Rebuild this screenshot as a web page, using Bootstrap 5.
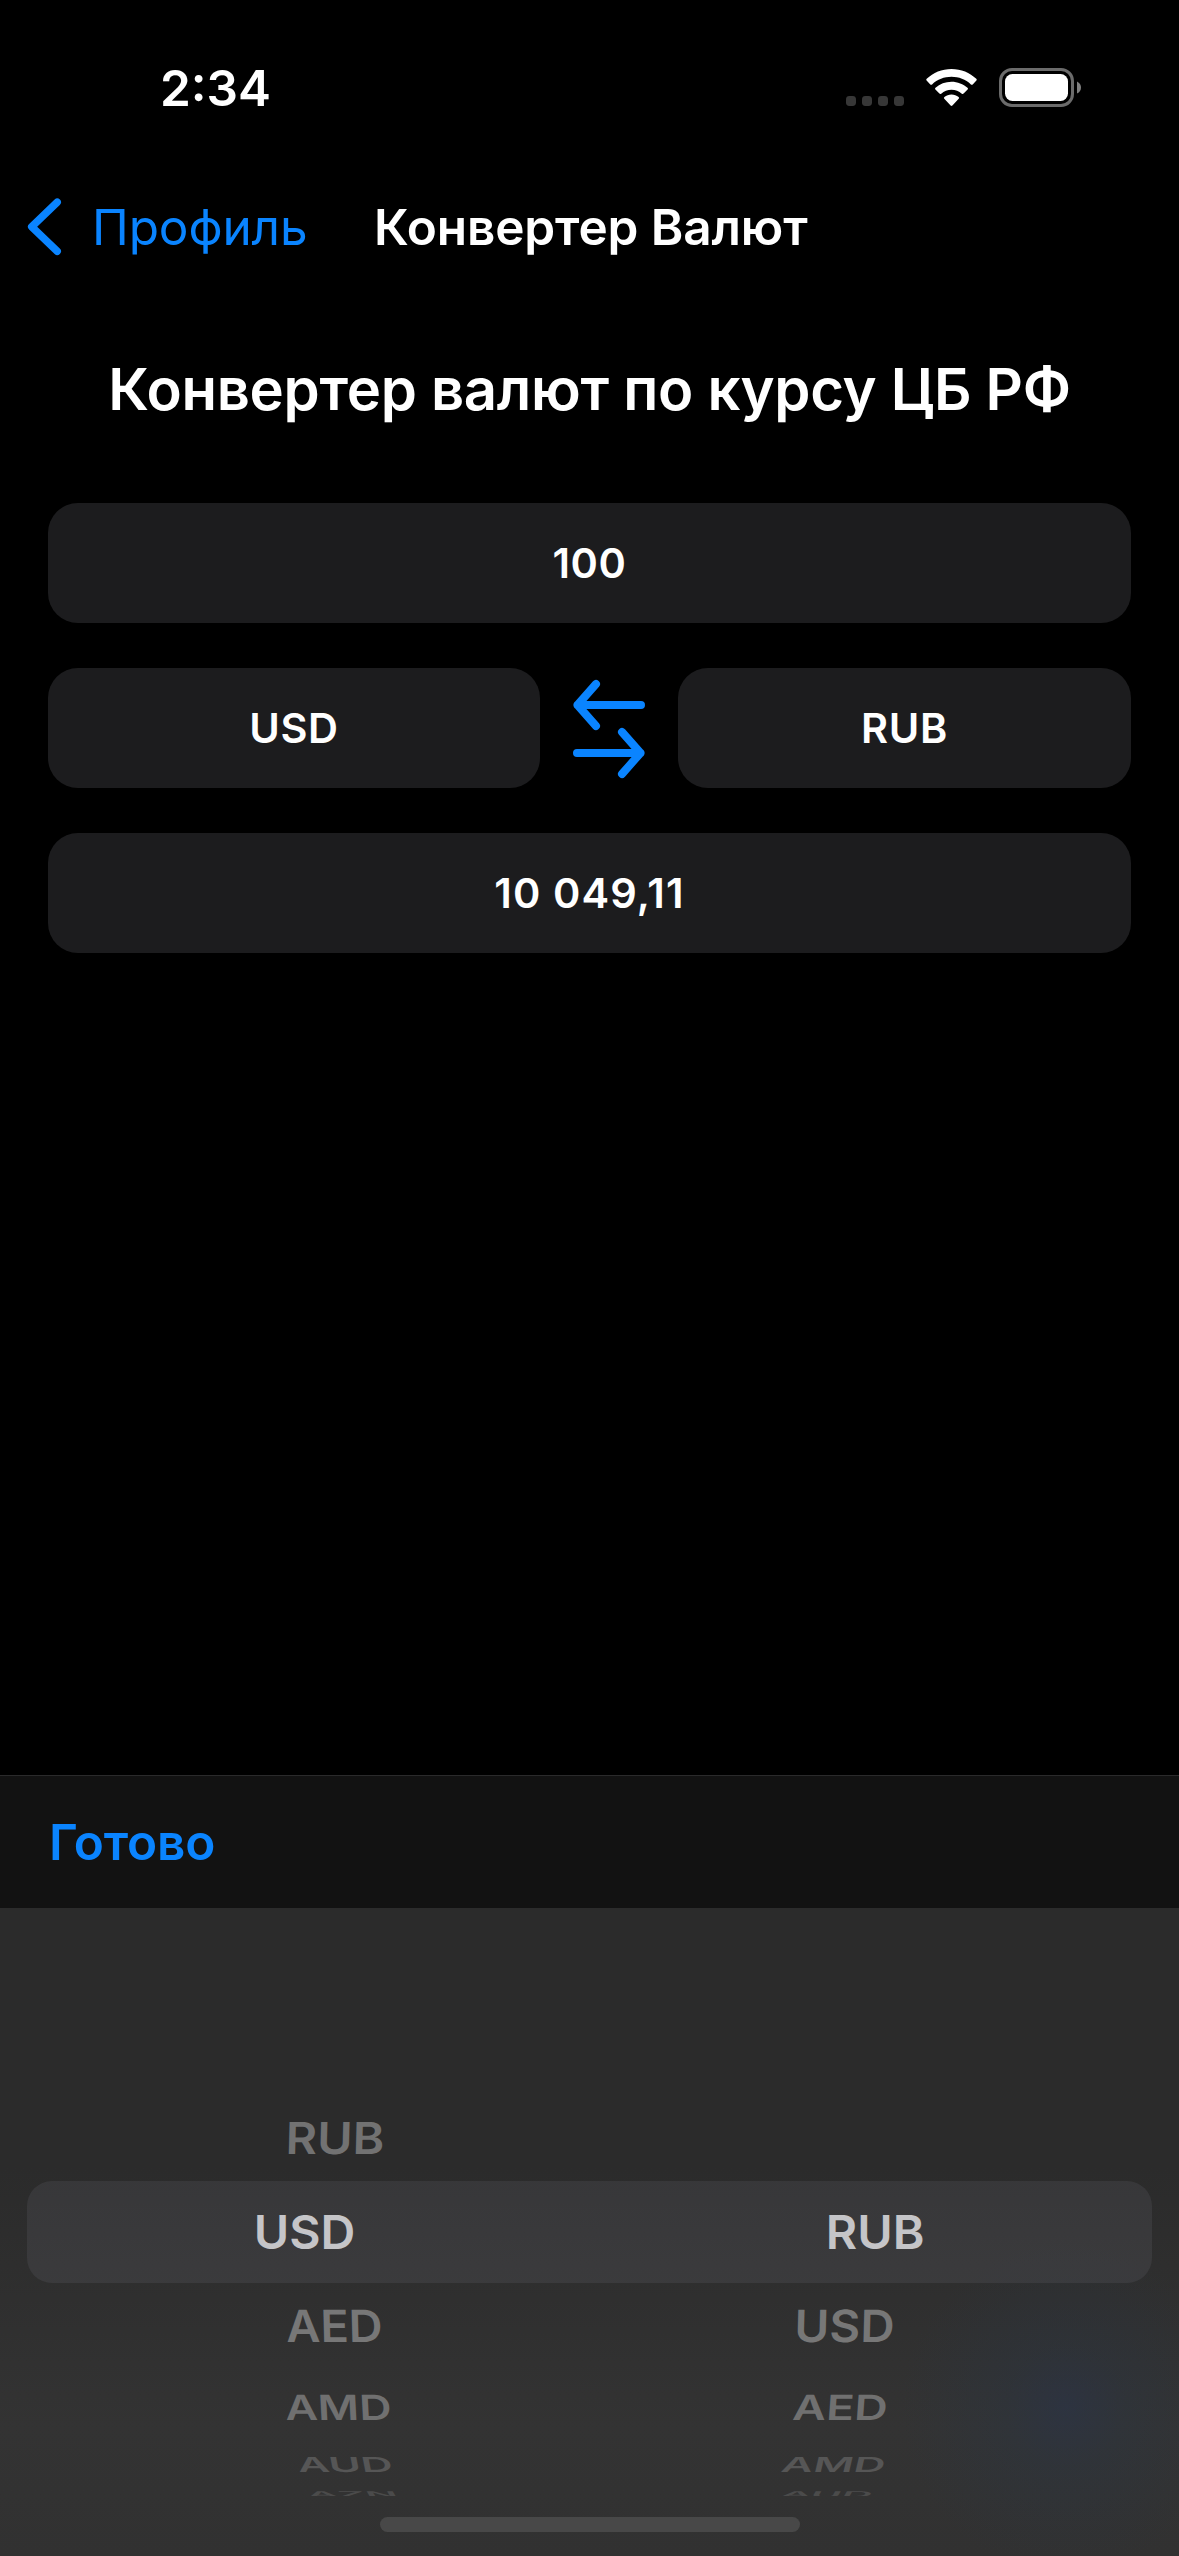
<!DOCTYPE html>
<html lang="ru" data-bs-theme="dark">
<head>
<meta charset="utf-8">
<meta name="viewport" content="width=device-width, initial-scale=1">
<title>Конвертер Валют</title>
<link href="https://cdn.jsdelivr.net/npm/bootstrap@5.3.0/dist/css/bootstrap.min.css" rel="stylesheet">
<style>
  body { background: #000; color: #fff; font-family: Inter, "Noto Sans", sans-serif; line-height: 1.2; }
  .screen { width: 1179px; height: 2556px; }
  svg { display: block; flex: none; }
  .tint { color: #0a84ff; }
  .status-bar { height: 176px; padding-left: 160px; padding-right: 98px; }
  .clock { font-size: 49.5px; letter-spacing: 0; padding-top: 2px; }
  .top-nav { height: 102px; padding: 0 0 0 24px; font-size: 49.5px; letter-spacing: -.12px; }
  .top-nav > a, .top-nav > span { padding-top: 2px; }
  .back-label { margin-left: 29px; width: 282px; }
  .headline { height: 225px; padding-top: 75px; font-size: 58px; letter-spacing: -.29px; line-height: 72px; }
  .form-area { padding: 0 48px; gap: 45px; font-size: 41.5px; }
  .field { height: 120px; border-radius: 30px; background: #1c1c1e; letter-spacing: .6px; padding-top: 2px; }
  .field-from { width: 492px; }
  .field-to { width: 453px; }
  .swap-icon { margin-top: 1px; }
  .total { letter-spacing: 1.1px; }
  .tool-row { height: 133px; border-top: 1px solid #2a2a2b; background: #121212; padding: 2px 0 0 49px; }
  .done { font-size: 49.5px; letter-spacing: -.15px; }
  .wheel { height: 648px; padding-top: 187px; font-size: 47px; line-height: 1;
    background:
      radial-gradient(circle at 1066px 500px, rgba(40,52,78,.5), rgba(40,54,72,.28) 60px, transparent 165px),
      linear-gradient(#2b2b2b 0 260px, #2f2f2f 390px, #333 520px, #313131 100%); }
  .band { margin: 0 27px; border-radius: 25px; background: rgba(118,118,128,.17); color: #c5c5c8; }
  .wheel-row { height: var(--h); }
  .wheel-row > span { flex: 1 1 0; text-align: center; }
  .wheel-row b { display: inline-block; font-weight: 600; transform: translate(var(--dx), var(--dy, -1px)) skewX(var(--sk, 0deg)) scale(var(--sx, 1), var(--sy, 1)); }
  .r0 { --h: 86px; --sy: .935; color: #727272; }
  .r1 { --h: 102px; --sx: 1.025; }
  .r2 { --h: 86px; --sy: .945; color: #777; }
  .r3 { --h: 77px; --sy: .735; --dy: 0px; color: #707070; }
  .r4 { --h: 37px; --sy: .44; --dy: 0px; color: #565656; }
  .r5 { --h: 20px; --sy: .17; --dy: 1px; color: #4b4b4b; clip-path: inset(0 0 7px); }
  .home-bar { width: 420px; height: 15px; border-radius: 8px; background: #484848; margin-top: 14px; }
</style>
</head>
<body>
<div class="screen d-flex flex-column overflow-hidden">
  <header class="status-bar d-flex align-items-center justify-content-between">
    <span class="clock fw-semibold">2:34</span>
    <svg width="236" height="40" viewBox="845 68 236 40" aria-hidden="true">
      <g fill="#373737">
        <rect x="846" y="96" width="10" height="10" rx="3.4"/><rect x="862" y="96" width="10" height="10" rx="3.4"/>
        <rect x="878" y="96" width="10" height="10" rx="3.4"/><rect x="894" y="96" width="10" height="10" rx="3.4"/>
      </g>
      <g fill="#fff">
        <path d="M951.5 69c9.6 0 18.300 3.700 24.800 9.800q1 .9.1 1.800l-3.700 3.800q-.9.9-1.800 0c-5.300-4.900-12.100-7.600-19.400-7.600s-14.100 2.700-19.400 7.600q-.9.9-1.800 0l-3.700-3.800q-.9-.9.1-1.800C933.200 72.700 941.900 69 951.500 69z"/>
        <path d="M951.5 81.700c6.100 0 11.700 2.300 16 6.100q1 .9.1 1.800l-4 4q-.9.8-1.800.1c-2.800-2.400-6.400-3.900-10.300-3.900s-7.500 1.500-10.300 3.900q-.9.7-1.800-.1l-4-4q-.9-.9.1-1.800c4.300-3.800 9.900-6.100 16-6.100z"/>
        <path d="M951.5 94.500c2.700 0 5.100.9 7.100 2.500q1 .9.100 1.800l-6.300 6.700q-.9.900-1.800 0l-6.300-6.700q-.9-.9.1-1.800c2-1.600 4.400-2.500 7.100-2.500z"/>
        <rect x="1005" y="74" width="63" height="27" rx="7.500"/>
      </g>
      <rect x="1000.500" y="69.500" width="72" height="36" rx="11.500" fill="none" stroke="#6b6b6b" stroke-width="3"/>
      <path d="M1077 81.500q4 2 4 6t-4 6z" fill="#808080"/>
    </svg>
  </header>

  <nav class="top-nav d-flex align-items-center">
    <svg class="tint" width="39" height="60" viewBox="24 197 39 60" fill="none" stroke="currentColor" stroke-width="7.500" stroke-linecap="round" stroke-linejoin="round" aria-hidden="true"><path d="M57.200 202.200 31.700 226.700 57.200 251.300"/></svg>
    <a class="back-label tint text-decoration-none" href="#">Профиль</a>
    <span class="fw-semibold text-nowrap">Конвертер Валют</span>
  </nav>

  <h1 class="headline fw-semibold text-center text-nowrap m-0">Конвертер валют по курсу ЦБ РФ</h1>

  <main class="form-area d-flex flex-column fw-semibold">
    <div class="field d-flex align-items-center justify-content-center">100</div>
    <div class="d-flex align-items-center justify-content-between">
      <div class="field field-from d-flex align-items-center justify-content-center">USD</div>
      <svg class="tint swap-icon" width="76" height="104" viewBox="571 677 76 104" fill="none" stroke="currentColor" stroke-width="8" stroke-linecap="round" stroke-linejoin="round" aria-label="Поменять валюты"><path d="M596 684 577.500 705 596 726M577.500 705H641M577 753H640.500M622 732 640.500 753 622 774"/></svg>
      <div class="field field-to d-flex align-items-center justify-content-center">RUB</div>
    </div>
    <div class="field total d-flex align-items-center justify-content-center">10 049,11</div>
  </main>

  <footer class="mt-auto">
    <div class="tool-row d-flex align-items-center"><a class="done tint fw-semibold text-decoration-none" href="#">Готово</a></div>
    <div class="wheel">
      <div class="wheel-row r0 d-flex align-items-center"><span><b style="--dx:40px;--sx:1.025;--sk:-1.5deg">RUB</b></span><span></span></div>
      <div class="band wheel-row r1 d-flex align-items-center"><span><b style="--dx:-4px">USD</b></span><span><b style="--dx:4px">RUB</b></span></div>
      <div class="wheel-row r2 d-flex align-items-center"><span><b style="--dx:40px;--sk:1.5deg">AED</b></span><span><b style="--dx:-40px;--sx:1.010;--sk:-1.500deg">USD</b></span></div>
      <div class="wheel-row r3 d-flex align-items-center"><span><b style="--dx:43.5px;--sx:.955;--sk:3deg">AMD</b></span><span><b style="--dx:-44px;--sx:.985;--sk:-4deg">AED</b></span></div>
      <div class="wheel-row r4 d-flex align-items-center"><span><b style="--dx:50px;--sx:.935;--sk:11deg">AUD</b></span><span><b style="--dx:-51px;--sx:.93;--sk:-13deg">AMD</b></span></div>
      <div class="wheel-row r5 d-flex align-items-center"><span><b style="--dx:58px;--sx:.9;--sk:30deg">AZN</b></span><span><b style="--dx:-57px;--sx:.9;--sk:-30deg">AUD</b></span></div>
      <div class="home-bar mx-auto"></div>
    </div>
  </footer>
</div>
<script src="https://cdn.jsdelivr.net/npm/bootstrap@5.3.0/dist/js/bootstrap.bundle.min.js"></script>
</body>
</html>
